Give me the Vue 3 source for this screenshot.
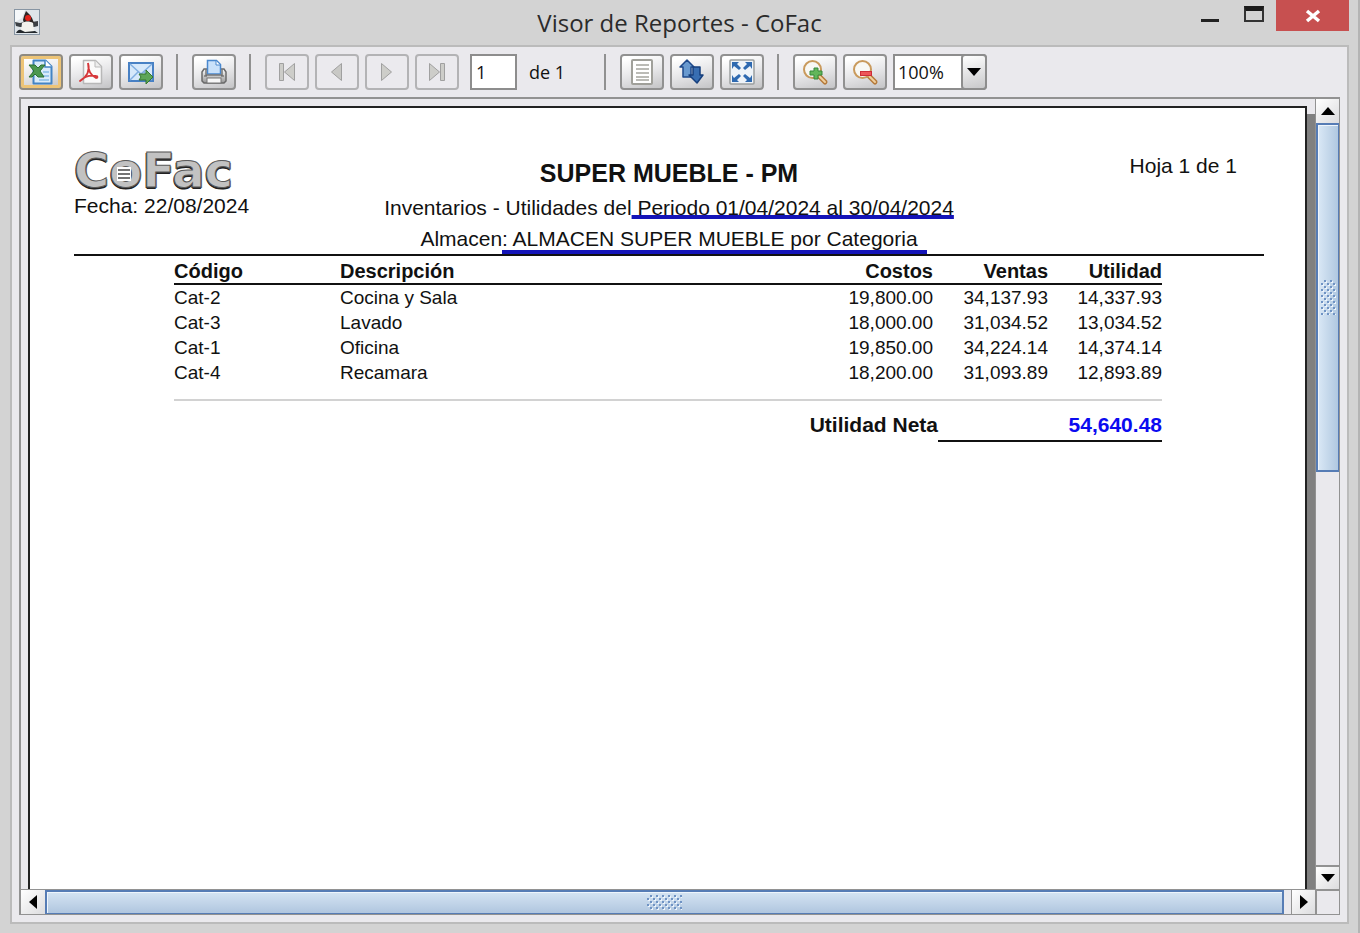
<script setup>
import { ref } from 'vue'

const page = ref('1')
const zoom = ref('100%')
const zoomLevels = ['50%', '75%', '100%', '150%', '200%']
const rows = [
  { code: 'Cat-2', name: 'Cocina y Sala', cost: '19,800.00', sales: '34,137.93', profit: '14,337.93' },
  { code: 'Cat-3', name: 'Lavado', cost: '18,000.00', sales: '31,034.52', profit: '13,034.52' },
  { code: 'Cat-1', name: 'Oficina', cost: '19,850.00', sales: '34,224.14', profit: '14,374.14' },
  { code: 'Cat-4', name: 'Recamara', cost: '18,200.00', sales: '31,093.89', profit: '12,893.89' },
]
const thumbs = { vertical: '47%', horizontal: '99.4%' }
</script>

<template>
  <div class="window">
    <header class="titlebar">
      <svg class="app-icon" width="26" height="26" viewBox="0 0 26 26" aria-hidden="true">
        <rect x="0.5" y="0.5" width="25" height="25" fill="#dfe5ea" stroke="#8795a3" />
        <path d="M1 1h10L8 9 1 13z" fill="#f5f8fa" />
        <path d="M1 13l5 1 4-1 8 0 6-1v5l-4 1-14 0-4-1z" fill="#3b4045" />
        <path d="M12 2l4 4 2 3 2 5-4-1-6 1-1-3 1-4z" fill="#2c2524" />
        <path d="M8 14c3-2 8-2 11 0l1 8c-3 2-9 2-13 0z" fill="#f2f2ee" />
        <path d="M2 24c1-2 3-4 5-3l4 2 10-1 3 2z" fill="#23282c" />
        <circle cx="14" cy="9" r="3" fill="#e0231b" />
      </svg>
      <h1>Visor de Reportes - CoFac</h1>
      <div class="window-buttons">
        <button class="win-min" aria-label="Minimizar"><span></span></button>
        <button class="win-max" aria-label="Maximizar"><span></span></button>
        <button class="win-close" aria-label="Cerrar">
          <svg width="16" height="14" viewBox="0 0 16 14"><path d="M2 2l12 10M14 2L2 12" stroke="#fff" stroke-width="3.500" /></svg>
        </button>
      </div>
    </header>

    <main class="frame">
      <div class="toolbar">
        <button class="tool focused" aria-label="Exportar a Excel">
          <svg width="28" height="28" viewBox="0 0 28 28">
            <path d="M6.500 2.500h12l6 6v17h-18z" fill="#d9ebfa" stroke="#4384c4" stroke-width="2" stroke-linejoin="round" />
            <path d="M18 2v7h7" fill="#fff" stroke="#4384c4" stroke-width="1.500" />
            <path d="M16 14h6M16 18h6M12 22h10" stroke="#9cc8ec" stroke-width="2" />
            <path d="M2 7h6l3 3 3-3h4l-5 6 4 6h-6l-3-3-3 3H2l5-6z" fill="#4c9750" stroke="#2c7033" />
          </svg>
        </button>
        <button class="tool" aria-label="Exportar a PDF">
          <svg width="28" height="28" viewBox="0 0 28 28">
            <path d="M6.500 2.500h12l6 6v17h-18z" fill="#fafafa" stroke="#b8b8b8" stroke-width="1.500" stroke-linejoin="round" />
            <path d="M18 2.500v6.500h6" fill="#eee" stroke="#bbb" />
            <path d="M11 5c2 7 0 13-8 18 4-4 10-6 16-5 2 0 2 2 0 2-4-2-8-7-8-15" fill="none" stroke="#d6373a" stroke-width="1.800" stroke-linejoin="round" />
          </svg>
        </button>
        <button class="tool" aria-label="Enviar por correo">
          <svg width="28" height="28" viewBox="0 0 28 28">
            <rect x="2" y="5" width="24" height="18" fill="#d6e8fa" stroke="#4780c4" stroke-width="2" />
            <path d="M3 6l11 10L25 6M3 22l8-8M25 22l-8-8" fill="none" stroke="#80aee0" stroke-width="1.500" />
            <path d="M12 16h7v-4l7 7-7 7v-4h-7l2-3z" fill="#5da657" stroke="#35772e" />
          </svg>
        </button>
        <span class="separator"></span>
        <button class="tool" aria-label="Imprimir">
          <svg width="28" height="28" viewBox="0 0 28 28">
            <defs><linearGradient id="printer" x2="0" y2="1"><stop stop-color="#fff" /><stop offset="1" stop-color="#969696" /></linearGradient></defs>
            <path d="M4 11h20l2 3v9l-2 2H4l-2-2v-9z" fill="url(#printer)" stroke="#696969" stroke-width="1.500" />
            <path d="M7.500 16V2.500h9l4 4V16z" fill="#c9e1fa" stroke="#4a88ce" stroke-width="1.500" />
            <path d="M16 3v4h4" fill="#fff" stroke="#4a88ce" />
            <path d="M6 11v6h16v-6" fill="none" stroke="#777" stroke-width="1.500" />
            <rect x="7" y="20" width="14" height="5" fill="#f7f7f7" stroke="#777" />
            <path d="M4 18h3M21 18h3" stroke="#555" />
          </svg>
        </button>
        <span class="separator"></span>
        <button class="tool" disabled aria-label="Primera página">
          <svg width="28" height="28" viewBox="0 0 28 28"><path d="M6.500 5.500h4v17h-4zM21.500 5.500v17L11.500 14z" fill="#cdcdc9" stroke="#a0a0a0" /></svg>
        </button>
        <button class="tool" disabled aria-label="Página anterior">
          <svg width="28" height="28" viewBox="0 0 28 28"><path d="M18.500 5.500v17L8.500 14z" fill="#c8c8c5" stroke="#a0a0a0" /></svg>
        </button>
        <button class="tool" disabled aria-label="Página siguiente">
          <svg width="28" height="28" viewBox="0 0 28 28"><path d="M8.500 5.500v17l10-8.500z" fill="#cdcdc9" stroke="#a0a0a0" /></svg>
        </button>
        <button class="tool" disabled aria-label="Última página">
          <svg width="28" height="28" viewBox="0 0 28 28"><path d="M17.500 5.500h4v17h-4zM6.500 5.500v17l10-8.500z" fill="#cdcdc9" stroke="#a0a0a0" /></svg>
        </button>
        <input id="page" v-model="page" class="page-input" type="text" aria-label="Página" />
        <label class="page-total" for="page">de 1</label>
        <span class="separator"></span>
        <button class="tool" aria-label="Tamaño real">
          <svg width="28" height="28" viewBox="0 0 28 28">
            <rect x="4" y="2" width="20" height="24" rx="1" fill="#fff" stroke="#a0a09a" stroke-width="2" />
            <path d="M8 7h13M8 11h13M8 15h13M8 19h13M8 22h13" stroke="#a5a59f" stroke-width="1.500" />
          </svg>
        </button>
        <button class="tool" aria-label="Ajustar ancho">
          <svg width="28" height="28" viewBox="0 0 28 28">
            <path d="M2 9l7-7 7 7h-3v10H5V9z" fill="#6899cf" stroke="#1d488a" stroke-width="1.500" stroke-linejoin="round" />
            <path d="M15 9h7v8h3l-6 8-8-8h4z" fill="#386eb2" stroke="#163f7d" stroke-width="1.500" stroke-linejoin="round" />
          </svg>
        </button>
        <button class="tool" aria-label="Ajustar página">
          <svg width="28" height="28" viewBox="0 0 28 28">
            <rect x="2" y="2" width="24" height="24" rx="1" fill="#eef3f8" stroke="#9b9e9e" stroke-width="1.500" />
            <g fill="#2e69b0">
              <path d="M4 4h7L9 6l4 4-2 2-5-4-2 3z" />
              <path d="M24 4v7l-2-3-5 4-2-2 4-4-2-2z" />
              <path d="M4 24v-7l2 3 5-4 2 2-4 4 2 2z" />
              <path d="M24 24h-7l2-2-4-4 2-2 5 4 2-3z" />
            </g>
          </svg>
        </button>
        <span class="separator"></span>
        <button class="tool" aria-label="Acercar">
          <svg width="28" height="28" viewBox="0 0 28 28">
            <path d="M18 18l6 6" stroke="#b57a3b" stroke-width="5" stroke-linecap="round" />
            <path d="M18 18l6 6" stroke="#f0cf9d" stroke-width="2" stroke-linecap="round" />
            <circle cx="11.500" cy="11.500" r="8.500" fill="#f8f8f4" stroke="#c99a5c" stroke-width="2" />
            <path d="M13 10h4v3h4v4h-4v4h-4v-4H9v-4h4z" fill="#63b65a" stroke="#36883a" />
          </svg>
        </button>
        <button class="tool" aria-label="Alejar">
          <svg width="28" height="28" viewBox="0 0 28 28">
            <path d="M18 18l6 6" stroke="#b57a3b" stroke-width="5" stroke-linecap="round" />
            <path d="M18 18l6 6" stroke="#f0cf9d" stroke-width="2" stroke-linecap="round" />
            <circle cx="11.500" cy="11.500" r="8.500" fill="#f8f8f4" stroke="#c99a5c" stroke-width="2" />
            <rect x="9.500" y="13.500" width="11" height="4" fill="#ed5558" stroke="#cc2e38" />
          </svg>
        </button>
        <div class="zoom">
          <select v-model="zoom" aria-label="Zoom">
            <option v-for="z in zoomLevels" :key="z">{{ z }}</option>
          </select>
          <span class="zoom-arrow"><svg width="14" height="8" viewBox="0 0 14 8"><path d="M0 0h14L7 8z" /></svg></span>
        </div>
      </div>

      <div class="viewer">
        <div class="viewport">
          <article class="paper">
            <header class="report-head">
              <div class="brand">
                <div class="logo">
                  <span class="logo-text">CoFac</span>
                  <svg class="logo-sheet" width="14" height="14" viewBox="0 0 14 14" aria-hidden="true">
                    <rect width="14" height="14" fill="#fff" />
                    <path d="M1 3h12M1 7h12M1 11h12" stroke="#444" stroke-width="1.500" />
                  </svg>
                </div>
                <p>Fecha: 22/08/2024</p>
              </div>
              <div class="heading">
                <h2>SUPER MUEBLE - PM</h2>
                <p>Inventarios - Utilidades del<span class="period"> Periodo 01/04/2024 al 30/04/2024</span></p>
                <p>Almacen<span class="store">: ALMACEN SUPER MUEBLE por Categoria</span></p>
              </div>
              <p class="sheet">Hoja 1 de 1</p>
            </header>

            <table>
              <colgroup>
                <col class="c-code" /><col /><col class="c-cost" /><col class="c-sales" /><col class="c-profit" />
              </colgroup>
              <thead>
                <tr><th>Código</th><th>Descripción</th><th class="num">Costos</th><th class="num">Ventas</th><th class="num last">Utilidad</th></tr>
              </thead>
              <tbody>
                <tr v-for="r in rows" :key="r.code">
                  <td>{{ r.code }}</td><td>{{ r.name }}</td><td class="num">{{ r.cost }}</td><td class="num">{{ r.sales }}</td><td class="num last">{{ r.profit }}</td>
                </tr>
              </tbody>
              <tbody class="total">
                <tr class="gap"><td colspan="5"></td></tr>
                <tr><th colspan="3" class="num last">Utilidad Neta</th><td colspan="2" class="num last net">54,640.48</td></tr>
              </tbody>
            </table>
          </article>
          <div class="shadow"></div>
        </div>

        <div class="scroll vertical">
          <button aria-label="Arriba"><svg width="14" height="8" viewBox="0 0 14 8"><path d="M0 8h14L7 0z" /></svg></button>
          <div class="track"><div class="thumb" :style="{ height: thumbs.vertical }"><span class="grip"></span></div></div>
          <button aria-label="Abajo"><svg width="14" height="8" viewBox="0 0 14 8"><path d="M0 0h14L7 8z" /></svg></button>
        </div>
        <div class="scroll horizontal">
          <button aria-label="Izquierda"><svg width="8" height="14" viewBox="0 0 8 14"><path d="M8 0v14L0 7z" /></svg></button>
          <div class="track"><div class="thumb" :style="{ width: thumbs.horizontal }"><span class="grip"></span></div></div>
          <button aria-label="Derecha"><svg width="8" height="14" viewBox="0 0 8 14"><path d="M0 0v14l8-7z" /></svg></button>
        </div>
        <div class="corner"></div>
      </div>
    </main>
  </div>
</template>

<style>
body {
  background: #d3d3d3;
}
</style>

<style scoped>
* {
  box-sizing: border-box;
}
h1, h2, p {
  margin: 0;
  font-weight: 400;
}
button {
  padding: 0;
  border: 0;
  background: none;
}
.window {
  display: flex;
  flex-direction: column;
  min-height: 100vh;
  padding: 0 9px 9px 10px;
  border-right: 2px solid #b4b4b4;
  background: #d3d3d3;
  font-family: "Open Sans", "Noto Sans", sans-serif;
  color: #111;
}
.titlebar {
  display: grid;
  grid-template-columns: 1fr auto 1fr;
  height: 45px;
}
.app-icon {
  margin: 9px 0 0 4px;
}
h1 {
  font-size: 24px;
  line-height: 45px;
  color: #2b2b2b;
}
.window-buttons {
  display: flex;
  justify-content: flex-end;
  align-items: flex-start;
}
.win-min, .win-max {
  display: flex;
  align-items: flex-end;
  justify-content: center;
  width: 44px;
  height: 22px;
}
.win-min span {
  width: 18px;
  height: 3px;
  background: #222;
}
.win-max span {
  width: 20px;
  height: 16px;
  border: 2px solid #333;
  border-top: 5px solid #1b1b1b;
}
.win-close {
  display: flex;
  align-items: center;
  justify-content: center;
  width: 73px;
  height: 31px;
  background: #c75050;
}
.frame {
  flex: 1;
  display: flex;
  flex-direction: column;
  padding: 0 7px 7px;
  border: 2px solid #bbb;
  background: #eae9ed;
}
.toolbar {
  display: flex;
  align-items: center;
  gap: 6px;
  height: 50px;
}
.tool {
  display: flex;
  align-items: center;
  justify-content: center;
  width: 44px;
  height: 36px;
  border: 2px solid #919191;
  border-radius: 4px;
  background: linear-gradient(165deg, #fff 10%, #e8e8ea 50%, #c4c4c6 100%);
}
.tool:disabled {
  border-color: #b3b3b5;
  background: #ebeaee;
}
.tool.focused {
  border-color: #8f8a80;
  box-shadow: inset 0 0 0 3px #edc477;
}
.separator {
  width: 2px;
  height: 36px;
  margin: 0 8px 0 7px;
  background: #919191;
}
.page-input {
  width: 47px;
  height: 36px;
  margin-left: 5px;
  padding: 0 4px;
  border: 2px solid #8d8d8d;
  background: #fff;
  font: 18px "Open Sans", sans-serif;
  color: #111;
}
.page-total {
  width: 62px;
  margin-left: 6px;
  font-size: 18px;
}
.zoom {
  position: relative;
}
.zoom select {
  appearance: none;
  width: 94px;
  height: 36px;
  padding: 0 26px 0 3px;
  border: 2px solid #8d8d8d;
  border-radius: 0 4px 4px 0;
  background: #fff;
  font: 18px "Open Sans", sans-serif;
  color: #111;
}
.zoom-arrow {
  position: absolute;
  inset: 0 0 0 auto;
  display: flex;
  align-items: center;
  justify-content: center;
  width: 26px;
  border: 2px solid #8d8d8d;
  border-radius: 4px;
  background: linear-gradient(165deg, #fff, #c8c8ca);
  pointer-events: none;
}
.viewer {
  flex: 1;
  display: grid;
  grid-template-columns: minmax(0, 1fr) 24px;
  grid-template-rows: minmax(0, 1fr) 25px;
  border: 2px solid #929292;
  border-right-width: 1px;
  border-bottom-width: 1px;
}
.viewport {
  display: flex;
  padding: 7px 0 0 7px;
}
.paper {
  flex: 1;
  padding: 42px 41px 40px 44px;
  border: 2px solid #222;
  border-bottom: 0;
  background: #fff;
  font: 21px/31px "Liberation Sans", Arial, sans-serif;
}
.shadow {
  width: 8px;
  margin-top: 8px;
  background: #808080;
}
.report-head {
  display: grid;
  grid-template-columns: 1fr auto 1fr;
  border-bottom: 2px solid #111;
}
.logo {
  position: relative;
  width: 166px;
  height: 40px;
}
.logo-text {
  display: block;
  font: bold 48px/40px "DejaVu Sans", sans-serif;
  color: #c2c2c2;
  -webkit-text-stroke: 1px #5a5a5a;
  text-shadow: -1px 1px #222, 0 2px #222, 1px 1px #666;
}
.logo-sheet {
  position: absolute;
  top: 17px;
  left: 43px;
}
.brand p {
  line-height: 31px;
}
.heading {
  padding-top: 6px;
  text-align: center;
}
h2 {
  margin-bottom: 2px;
  font-size: 25px;
  font-weight: 700;
  line-height: 34px;
}
.period {
  text-decoration: underline 4px #1414b8;
  text-underline-offset: 0;
  text-decoration-skip-ink: none;
}
.store {
  margin-right: -9px;
  padding-right: 9px;
  border-bottom: 4px solid #1414b8;
}
.sheet {
  margin-right: 27px;
  text-align: right;
}
table {
  width: calc(100% - 202px);
  margin-left: 100px;
  border-collapse: collapse;
  table-layout: fixed;
  font-size: 19px;
  line-height: 25px;
}
.c-code { width: 166px; }
.c-cost { width: 130px; }
.c-sales { width: 115px; }
.c-profit { width: 109px; }
th, td {
  padding: 0;
  text-align: left;
}
thead th {
  padding-top: 4px;
  border-bottom: 2px solid #111;
  font-size: 20px;
  line-height: 23px;
}
.num {
  padding-right: 5px;
  text-align: right;
}
.last {
  padding-right: 0;
}
.total {
  font-size: 21px;
  line-height: 30px;
}
.gap td {
  height: 15px;
  border-bottom: 2px solid #d2d2d2;
}
.total th, .net {
  padding-top: 9px;
  vertical-align: top;
}
.net {
  border-bottom: 2px solid #111;
  font-weight: 700;
  color: #0b0bf0;
}
.scroll {
  display: flex;
  background: #eae9ed;
}
.scroll button {
  display: flex;
  align-items: center;
  justify-content: center;
  flex: none;
  width: 24px;
  height: 24px;
  background: linear-gradient(135deg, #fff, #dcdcde);
}
.vertical {
  flex-direction: column;
  border-left: 1px solid #929292;
}
.vertical button {
  width: 23px;
}
.vertical button:last-child {
  border-top: 2px solid #929292;
}
.horizontal {
  border-top: 1px solid #929292;
}
.horizontal button:last-child {
  border-left: 1px solid #929292;
}
.track {
  flex: 1;
}
.thumb {
  display: flex;
  align-items: center;
  justify-content: center;
  height: 100%;
  border: 2px solid #567cb5;
  box-shadow: inset 1px 1px #eef5fc;
}
.vertical .thumb {
  border-right-width: 1px;
  background: linear-gradient(90deg, #dae8f6, #b0c8e0);
}
.horizontal .thumb {
  border-bottom-width: 1px;
  background: linear-gradient(#d5e4f3, #b0c6df);
}
.grip {
  width: 15px;
  height: 35px;
  background:
    conic-gradient(from 270deg at 2px 2px, #6f93c4 25%, transparent 0) 3px 0 / 6px 6px,
    conic-gradient(from 270deg at 2px 2px, #6f93c4 25%, transparent 0) 0 3px / 6px 6px,
    conic-gradient(from 270deg at 2px 2px, #eef5fc 25%, transparent 0) 4px 1px / 6px 6px,
    conic-gradient(from 270deg at 2px 2px, #eef5fc 25%, transparent 0) 1px 4px / 6px 6px;
}
.horizontal .grip {
  width: 35px;
  height: 15px;
}
.corner {
  border-top: 2px solid #929292;
  border-left: 2px solid #929292;
}
</style>
